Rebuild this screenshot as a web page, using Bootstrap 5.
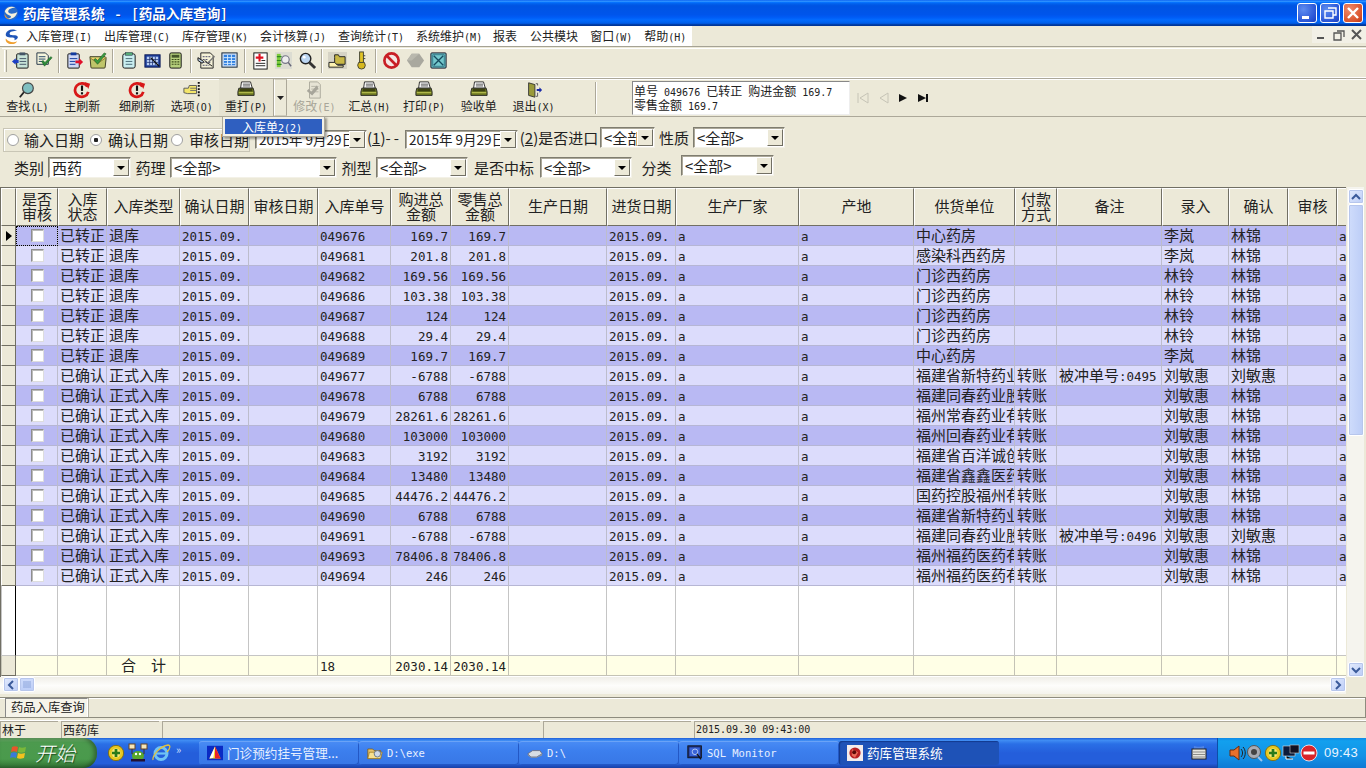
<!DOCTYPE html>
<html lang="zh-CN">
<head>
<meta charset="utf-8">
<title>药库管理系统</title>
<link href="https://cdn.jsdelivr.net/npm/bootstrap@5.3.0/dist/css/bootstrap.min.css" rel="stylesheet">
<style>
html,body{margin:0;padding:0;overflow:hidden;background:#ece9d8}
body{font-family:"Noto Sans CJK SC","Liberation Sans",sans-serif;font-size:15px;color:#222;line-height:1.2}
.lt{font-family:"DejaVu Sans Mono",monospace;white-space:pre}
.app{width:1366px;height:768px;position:relative;overflow:hidden}
/* title */
.titlebar{height:26px;padding:0 3px 0 3px;background:linear-gradient(180deg,#0058ee 0,#3593ff 4%,#288eff 6%,#127dff 8%,#036ffc 10%,#0262ee 14%,#0057e5 20%,#0054e3 24%,#0055eb 56%,#005bf5 66%,#026afe 76%,#0062ef 86%,#0052d6 92%,#0040ab 94%,#003092 100%);color:#fff}
.titletxt{font-weight:700;font-size:13.6px;margin-left:4px;white-space:nowrap;text-shadow:1px 1px 0 #0b3aa5}
.tdash{display:inline-block;width:27px;text-align:center}
.tbr{padding:0 1px}
.wbtn{width:20px;height:20px;border:1px solid #fff;border-radius:3px;background:radial-gradient(circle at 30% 30%,#5d8cf0,#2a55d6 70%,#1a3fbd);margin-left:3px;padding:0}
.wbtn.cl{background:radial-gradient(circle at 30% 30%,#f0896a,#d9532c 70%,#b8341a)}
.wbtn svg{display:block}
/* menu */
.menubar{height:20px;background:#ece9d8}
.menuwhite{width:692px;height:20px;background:#fff;padding-left:3px}
.mitem{font-size:12px;color:#222;white-space:nowrap}
.mitem .lt{font-size:10px}
.mdib{width:18px;height:17px;background:#f2f0e6}
.rb1{height:32px;border-top:1px solid #a5a294;padding:1px 0 0 2px;border-bottom:1px solid #fff}
.rb1-in{border-top:1px solid #fff;height:29px;padding-bottom:5px}
.grip{width:3px;height:22px;border-left:1px solid #fff;border-right:1px solid #aaa79a;margin:0 2px 0 2px}
.sep{width:2px;height:24px;border-left:1px solid #aca899;border-right:1px solid #fff;margin:0 3px 0 2px}
.tico{width:23.5px;height:23px;display:flex;align-items:center;justify-content:center}
.rb2{height:39px;border-top:1px solid #aca899;border-bottom:1px solid #aca899;box-shadow:inset 0 1px 0 #fff;position:relative}
.btn.bigb{width:54.8px;height:37px;border:0;border-radius:0;padding:2px 0 0;font-size:12px;color:#222;display:flex;flex-direction:column;align-items:center;line-height:14px;background:transparent;white-space:nowrap}
.btn.bigb .lt{font-size:10px}
.btn.bigb.dis{color:#a8a699;opacity:1}
.btn.bigb.on{background:#e6e3d2;border-right:1px solid #aca899}
.ddarrow{width:13px;height:37px;border:1px solid #d0cdbd;border-right-color:#aca899;border-left-color:#fff;display:flex;align-items:center;justify-content:center}
.infobox{position:absolute;left:632px;top:2px;width:218px;height:34px;background:#fff;border:1px solid #888;border-right-color:#eee;border-bottom-color:#eee;font-size:12px;line-height:12px;padding:3px 1px;white-space:pre}
.infobox .lt{font-size:10px}
.rsep{position:absolute;left:595px;top:3px;width:2px;height:32px;border-left:1px solid #aca899;border-right:1px solid #fff}
.navs{position:absolute;left:853px;top:10px;display:flex}
.navs span{width:20px;height:18px;display:flex;justify-content:center;align-items:center}
.dropdown-menu.popm{position:absolute;left:222px;top:116px;width:103px;height:21px;min-width:0;padding:2px;border-radius:0;background:#f3f1e7;border:1px solid #aca899;box-shadow:2px 2px 2px rgba(0,0,0,.35);z-index:20;display:block}
.popi{background:#2f5fc0;color:#fff;font-size:12px;height:15px;line-height:15px;padding-left:17px;display:block}
.popi .lt{font-size:10px}
/* filter */
.filters{height:70px;position:relative}
.frow1{display:grid;grid-template-columns:252px 112px 38px 113px 82px 55px 38px 92px;position:absolute;left:3px;top:10px;align-items:start}
.frow2{display:grid;grid-template-columns:34px 83px 39px 167px 39px 92px 72px 92px 49px 93px;position:absolute;left:14px;top:40px;align-items:start}
.gbox{height:24px;border:1px solid #c9c6b6;box-shadow:inset 1px 1px 0 #fff;width:247px;display:flex;align-items:center;padding-left:3px;margin-top:1px;white-space:nowrap}
.rd{appearance:none;width:12px;height:12px;border-radius:50%;border:1px solid #a0a0a0;background:#fff;margin:0;flex:none}
.rd:checked{background:radial-gradient(circle,#222 0,#222 2px,#fff 2.5px)}
.gl5{margin-left:5px}.gl6{margin-left:6px}.gl3{margin-left:3px}
.lab{line-height:21px;white-space:nowrap;text-align:center}
.dsh{letter-spacing:3px}
.combo{height:21px;background:#fff;border:1px solid #7f7d70;border-right-color:#f3f1e7;border-bottom-color:#f3f1e7;box-shadow:inset 1px 1px 0 #aca899;display:flex;justify-content:space-between;align-items:center;padding-left:3px;padding-right:1px;overflow:hidden;white-space:nowrap}
.combo b{font-weight:400;overflow:hidden;flex:1;line-height:19px}
.combo i{flex:none;width:16px;height:17px;background:#ece9d8;border:1px solid;border-color:#fff #716f64 #716f64 #fff;display:flex;align-items:center;justify-content:center}
.combo i::after{content:"";border:4px solid transparent;border-top:4px solid #000;border-bottom:0}
.combo.up2{margin-top:-2px}
.dt{font-size:12px;margin-top:3px;height:19px}
.dt b{line-height:17px;font-size:13.5px}
.ul{text-decoration:underline}
/* grid */
.gridwrap{height:490px;display:flex}
.gridbox{width:1346px;height:490px;border-top:1px solid #716f64;border-left:1px solid #716f64;overflow:hidden;background:#fff}
.table.gridt{table-layout:fixed;width:1346px;border-collapse:separate;border-spacing:0;margin:0;color:#222}
.table.gridt td,.table.gridt th{padding:0 1px 1px 2px;border:0;border-right:1px solid #bdbdcc;border-bottom:1px solid #b6b6d4;white-space:nowrap;font-weight:400;font-size:15px;line-height:18px;height:20px;vertical-align:middle}
.table.gridt td.clipc{overflow:hidden}
.table.gridt td .lt{font-size:12.5px;line-height:1}
.table.gridt td.nm,.table.gridt td.mn{font-family:"DejaVu Sans Mono",monospace;font-size:12.5px;padding-top:3px;padding-bottom:0;line-height:16px}
.table.gridt td.nm{text-align:right;padding-right:2px}
.table.gridt thead th{--bs-table-bg:#ece9d8;height:38px;text-align:center;line-height:15px;white-space:normal;border-top:1px solid #fff;border-left:1px solid #fff;border-right:1px solid #716f64;border-bottom:1px solid #716f64;padding:0 0 3px}
.table.gridt .ind{--bs-table-bg:#ece9d8;padding:0;border-right:1px solid #716f64;border-bottom:1px solid #716f64;border-left:1px solid #fff}
.r1{--bs-table-bg:#b9b9f3}
.r2{--bs-table-bg:#dcdcfc}
.table.gridt .fill td{--bs-table-bg:#fff;height:70px;border-color:#c5c5c5}
.table.gridt .tot td{--bs-table-bg:#ffffe6;border-color:#c4c3b5}
.table.gridt .tot td.ind{--bs-table-bg:#ece9d8;border-right-color:#716f64;border-bottom-color:#716f64}
.table.gridt .fill td.ind{--bs-table-bg:#fff;border-right-color:#000}
.cbk{appearance:none;display:block;margin:0 auto;width:13px;height:13px;background:#fff;border:1px solid #8e8e8e;border-right-color:#ddd;border-bottom-color:#ddd;box-shadow:inset 1px 1px 0 #bbb}
.table.gridt td.foc{outline:1px dotted #000;outline-offset:-1px}
.tri{display:block;border:5px solid transparent;border-left:6px solid #000;border-right:0;margin-left:4px}
.vscroll{width:17px;margin-left:1px;background:#f5f4ee;display:flex;flex-direction:column;align-items:center;height:490px;padding-top:2px}
.sbtn{width:16px;height:15px;background:linear-gradient(135deg,#e3ebfd,#bccdf7);border:1px solid #fff;border-radius:2px;box-shadow:0 0 0 1px #b7c6ec inset;display:flex;align-items:center;justify-content:center;flex:none}
.vthumb{width:16px;height:232px;background:linear-gradient(90deg,#cfdcfb,#bccdf7);border:1px solid #fff;border-radius:2px;box-shadow:0 0 0 1px #b7c6ec inset;flex:none}
.hscroll{height:17px;display:flex;padding-left:3px;background:linear-gradient(#f0efe8,#fdfdfb 50%,#f4f3ec);width:1346px}
.hthumb{width:16px;height:15px;background:linear-gradient(#cfdcfb,#bccdf7);border:1px solid #fff;border-radius:2px;box-shadow:0 0 0 1px #b7c6ec inset;display:flex;justify-content:center;align-items:center}
.corner{position:absolute;left:1347px;top:677px;width:19px;height:19px;background:#ece9d8}
/* tabs/status */
.tabs{height:26px;padding-top:3px}
.tabs-in{height:21px;display:flex;border-top:1px solid #8e8c7e;border-bottom:1px solid #8e8c7e;border-right:1px solid #8e8c7e;box-shadow:inset 0 1px 0 #fff}
.tabx{margin-left:5px;height:19px;width:83px;border-left:1px solid #888;border-top:1px solid #888;border-right:1px solid #fff;background:#f6f4ea;font-size:12.3px;line-height:17px;padding-left:5px;white-space:nowrap}
.tabtail{border-left:1px solid #b5b3a5;height:19px}
.statusb{height:18px;border-top:1px solid #fff;font-size:12px;line-height:15px}
.stc{border-left:1px solid #aca899;border-top:1px solid #aca899;height:17px;margin-right:3px;padding-left:1px;white-space:nowrap}
.stc.lt{font-size:10px}
.st58{width:58px}.st98{width:98px}.st378{width:378px}.st148{width:148px}
/* task */
.taskbar{height:30px;background:linear-gradient(180deg,#1f5fd8 0,#3f8cf3 8%,#2a6fe6 20%,#245edb 50%,#245edb 85%,#1941a5 100%);display:flex;color:#fff;position:relative;align-items:center}
.startb{width:97px;height:30px;background:linear-gradient(180deg,#6aa868 0,#4c9a4e 15%,#4a9a4c 70%,#2f6f31 100%);border-radius:0 14px 14px 0;box-shadow:inset -3px 0 4px rgba(0,0,0,.35);display:flex;align-items:center;padding-left:9px;gap:6px;font-style:italic;font-size:20px;font-weight:300;color:#fff;text-shadow:1px 1px 1px #1c4a1d;flex:none}
.quick{width:102px;display:flex;align-items:center;padding-left:10px;gap:3px;flex:none}
.chev{font-size:11px;color:#cfe0ff;margin-left:2px;line-height:1;margin-top:-8px}
.tbtn{width:160px;height:24px;border-radius:3px;background:linear-gradient(180deg,#4a8cf5,#3c7fee 40%,#3877e6);box-shadow:inset 0 1px 0 #6aa3f7,inset -1px -1px 0 #2358c5;display:flex;align-items:center;padding-left:8px;gap:4px;font-size:12.6px;white-space:nowrap;overflow:hidden;flex:none;color:#e8f0ff}
.tbtn .lt{font-size:10.5px}
.tbtn.act{background:#1e52b7;box-shadow:inset 1px 1px 1px #123a8e;color:#fff}
.tray{position:absolute;left:1217px;top:0;width:149px;height:30px;background:linear-gradient(180deg,#0f8ae8,#12a0ee 10%,#1292e6 60%,#0f7ad4);border-left:1px solid #0c4fa8;display:flex;align-items:center;padding-left:10px}
.clock{font-family:"Liberation Sans",sans-serif;font-size:13px;color:#eaf4ff;margin-left:6px;letter-spacing:.3px}
.kbd{position:absolute;left:1191px;top:7px}
svg{flex:none}
</style>
</head>
<body>
<svg width="0" height="0" class="position-absolute">
<defs>
<symbol id="logo" viewBox="0 0 18 18"><circle cx="9" cy="9" r="8" fill="#2a6cc8"/><path d="M2 7C4 2 10 1 14 3 9 3 5 5 6 8 7 11 13 10 16 8 15 14 9 17 5 15 9 15 10 13 8 12 6 11 3 10 2 7Z" fill="#f7f1dc"/><path d="M2 10c1 3 3 5 6 6-3 0-7-2-6-6z" fill="#e89a3a"/></symbol>
<symbol id="logom" viewBox="0 0 18 18"><path d="M15 3C10 0 4 2 3 6 2 10 7 10 10 10 12 10 13 11 12 13 16 12 17 9 14 8 11 7 7 8 7 6 7 4 11 3 15 3Z" fill="#1f55b8"/><path d="M3 11c-1 3 2 6 6 6 3 0 5-1 6-3-4 2-9 1-12-3z" fill="#f0a030"/></symbol>
<symbol id="i1" viewBox="0 0 20 20"><rect x="6" y="3" width="12" height="15" rx="1" fill="#c7e3d8" stroke="#111"/><rect x="9" y="1.5" width="6" height="3" fill="#456" /><path d="M9 8h7M9 11h7M9 14h7" stroke="#456"/><path d="M1 11l4-3.5v2h3v3H5v2z" fill="#1d3fc4"/></symbol>
<symbol id="i2" viewBox="0 0 20 20"><path d="M2 2h9l3 3v9H2z" fill="#f5f5dc" stroke="#234"/><path d="M4 6h7M4 8.5h7M4 11h5" stroke="#246"/><path d="M7 11l3 5 8-9-1.500-1-6 6-2-2z" fill="#2e8b3a" stroke="#1a5c24" stroke-width=".6"/></symbol>
<symbol id="i3" viewBox="0 0 20 20"><rect x="3" y="3" width="12" height="15" rx="1" fill="#cfd8f5" stroke="#111"/><rect x="6" y="1.500" width="6" height="3" fill="#123b9e"/><path d="M5 8h8M5 11h6M5 14h6" stroke="#123b9e"/><path d="M19 11.500l-4-4v2.500h-4v3h4V15.500z" fill="#e0102c"/></symbol>
<symbol id="i4" viewBox="0 0 20 20"><path d="M1 6h16a2 2 0 0 1 1 2l-1 9a1 1 0 0 1-1 1H3a1 1 0 0 1-1-1z" fill="#bfc56a" stroke="#3c3c22"/><path d="M1 7l8 6 9-6" fill="#f0d36e" stroke="#6b5c20" stroke-width=".7"/><path d="M5 9l4 5 9-11-2-1-7 8-2-2z" fill="#3a9c3f" stroke="#1c5a20" stroke-width=".6"/></symbol>
<symbol id="i5" viewBox="0 0 20 20"><rect x="4" y="3" width="13" height="15" rx="2" fill="#c9eef0" stroke="#111"/><rect x="7" y="1.500" width="7" height="3" fill="#5a7" stroke="#234" stroke-width=".5"/><path d="M7 8h7M7 11h7M7 14h7" stroke="#4a6a76"/></symbol>
<symbol id="i6" viewBox="0 0 20 20"><rect x="2" y="4" width="16" height="13" fill="#1d3f9d" stroke="#0c1a55"/><path d="M4 6h12v9H4z" fill="#b8cff5"/><path d="M4 9h12M4 12h12M7 6v9M10 6v9M13 6v9" stroke="#1c3070" stroke-width=".8"/><path d="M8 7l9 9" stroke="#111" stroke-width="1.400"/></symbol>
<symbol id="i7" viewBox="0 0 20 20"><rect x="4" y="2" width="12" height="16" rx="1.500" fill="#b6cf7c" stroke="#111"/><rect x="6" y="4" width="8" height="3" fill="#44552a"/><path d="M6 9h8M6 11.500h8M6 14h8" stroke="#3a4a1a" stroke-width="1.200" stroke-dasharray="2 1"/></symbol>
<symbol id="i8" viewBox="0 0 20 20"><path d="M4 2h10l3 3v13H4z" fill="#f5f2d8" stroke="#222"/><path d="M6 6h8M6 9h6M6 12h8M6 15h7" stroke="#446" stroke-dasharray="2 1"/><path d="M1 7l6 4-1.500 2L1 10zM8 10l8 6" stroke="#111" fill="#bcd"/><path d="M10 13l8-8 1 1-8 8z" fill="#777"/></symbol>
<symbol id="i9" viewBox="0 0 20 20"><rect x="2" y="2" width="16" height="15" fill="#cfe0f5" stroke="#123"/><path d="M4 4h12v11H4z" fill="#2f7fe0"/><path d="M4 7h12M4 10h12M4 13h12M8 4v11M12 4v11" stroke="#d6ecff"/></symbol>
<symbol id="i10" viewBox="0 0 20 20"><rect x="3" y="2" width="14" height="17" fill="#fff" stroke="#111"/><path d="M9 3v8M5 7h8" stroke="#e01020" stroke-width="2.200"/><path d="M5 13h10M5 15.500h10M11 10h4" stroke="#222"/></symbol>
<symbol id="i11" viewBox="0 0 20 20"><rect x="1" y="1" width="18" height="18" fill="#dcdcd2"/><rect x="3" y="3" width="4" height="14" fill="#7ecb3c"/><path d="M3 6h5M3 10h5M3 14h5" stroke="#2c8a1e" stroke-width="1.300"/><circle cx="12" cy="9" r="4" fill="#eee" stroke="#778" stroke-width="1.200"/><path d="M15 12l3 4" stroke="#667" stroke-width="1.500"/></symbol>
<symbol id="i12" viewBox="0 0 20 20"><circle cx="8" cy="8" r="5.500" fill="#bcd6f2" stroke="#222" stroke-width="1.500"/><circle cx="6.500" cy="6.500" r="1.500" fill="#fff"/><path d="M12 12l6 6" stroke="#333" stroke-width="3"/></symbol>
<symbol id="i13" viewBox="0 0 20 20"><rect x="0" y="1" width="20" height="18" fill="#d6d3c5"/><path d="M7 7V4h4l1 2h6v8H7z" fill="#c9b846" stroke="#222"/><path d="M1 12h6l3 3h6v2H1z" fill="#fdf2b0" stroke="#222"/></symbol>
<symbol id="i14" viewBox="0 0 20 20"><circle cx="10" cy="15" r="4" fill="#d6b81e" stroke="#443"/><rect x="8" y="1" width="4" height="11" fill="#e0c326" stroke="#443"/><path d="M12 5h2M12 8h2" stroke="#443"/></symbol>
<symbol id="i15" viewBox="0 0 20 20"><circle cx="10" cy="10" r="7.500" fill="#f4e7e4" stroke="#c81e25" stroke-width="2.800"/><path d="M5 5l10 10" stroke="#c81e25" stroke-width="2.800"/></symbol>
<symbol id="i16" viewBox="0 0 20 20"><path d="M6 3h8l5 7-5 7H6L1 10z" fill="#a9a89f"/><path d="M1 10l5-7h8l-8 7z" fill="#b9b8ae"/></symbol>
<symbol id="i17" viewBox="0 0 20 20"><rect x="2" y="2" width="16" height="16" rx="1" fill="#74c8cc" stroke="#112"/><path d="M5 5l10 10M15 5L5 15" stroke="#154a5e" stroke-width="1.400"/><rect x="4" y="4" width="12" height="12" fill="none" stroke="#1a5a70" stroke-width=".7"/></symbol>
<symbol id="bfind" viewBox="0 0 20 20"><circle cx="11" cy="8" r="6" fill="#7fbfc0" stroke="#444" stroke-width="1.300"/><path d="M6.500 12.500L2 18" stroke="#222" stroke-width="2"/></symbol>
<symbol id="bref" viewBox="0 0 20 20"><path d="M16 6A7.500 7.500 0 1 0 17 12" fill="none" stroke="#d81818" stroke-width="3"/><path d="M13 1l6 2-2 6z" fill="#d81818"/><rect x="8.800" y="5" width="2.400" height="6" fill="#111"/><rect x="8.800" y="12.500" width="2.400" height="2.400" fill="#111"/></symbol>
<symbol id="bopt" viewBox="0 0 20 20"><path d="M1 8h5l1-3 8 0v9H5l-4-1z" fill="#f4e66a" stroke="#555"/><path d="M8 8h7M8 10.500h7" stroke="#666"/><path d="M17.500 1v16" stroke="#111" stroke-width="2.200" stroke-dasharray="2 1.500"/></symbol>
<symbol id="bprn" viewBox="0 0 20 20"><path d="M5 1h10l2 7H4z" fill="#fff" stroke="#222"/><path d="M6.500 3.500h8M6.500 5.500h8" stroke="#444"/><path d="M2 8h16l1 4v4H1v-4z" fill="#6f7a22" stroke="#222"/><path d="M2 13h16" stroke="#c9d05a"/><rect x="3" y="9" width="14" height="2.500" fill="#3a3f10"/></symbol>
<symbol id="bedit" viewBox="0 0 20 20"><path d="M5 1h9l3 3v15H5z" fill="#e6e3d4" stroke="#a9a79a"/><path d="M7 6h8M7 9h8M7 12h8" stroke="#b3b1a4"/><path d="M2 11l6 5 7-8-2-3-6 7-3-3z" fill="#a7a59a"/></symbol>
<symbol id="bexit" viewBox="0 0 20 20"><path d="M4 2l7 2v14l-7-2z" fill="#9a9a3a" stroke="#333"/><path d="M12 3h2v2M12 17h2v-4" stroke="#555" fill="none"/><path d="M13 9h3V7l3 3-3 3v-2h-3z" fill="#1a2aa8"/></symbol>
<symbol id="flag" viewBox="0 0 20 20"><path d="M3 4c2-1 4-1 6 0l-1 5c-2-1-4-1-6 0z" fill="#e8552a"/><path d="M10 4c2 1 4 1 7 0l-1 5c-3 1-5 1-7 0z" fill="#7ab83a"/><path d="M2 10c2-1 4-1 6 0l-1 5c-2-1-4-1-6 0z" fill="#3a7ad8"/><path d="M9 10c2 1 4 1 7 0l-1 5c-3 1-5 1-7 0z" fill="#f4c21e"/></symbol>
<symbol id="q360" viewBox="0 0 20 20"><circle cx="10" cy="10" r="8.500" fill="#e8c820" stroke="#7a6a10"/><circle cx="10" cy="10" r="5" fill="#f8e878"/><path d="M8.500 5.500h3v3h3v3h-3v3h-3v-3h-3v-3h3z" fill="#2a7a1a"/></symbol>
<symbol id="qfrog" viewBox="0 0 20 20"><rect x="1" y="1" width="6" height="5" fill="#f5e6b8" stroke="#642"/><rect x="13" y="1" width="6" height="5" fill="#f5e6b8" stroke="#642"/><path d="M4 6v5h12V6" fill="none" stroke="#432"/><ellipse cx="10" cy="13" rx="6" ry="5" fill="#58a82a"/><rect x="3" y="16" width="14" height="2.500" fill="#213"/><circle cx="8" cy="11" r="1.200" fill="#fff"/><circle cx="12" cy="11" r="1.200" fill="#fff"/></symbol>
<symbol id="qie" viewBox="0 0 20 20"><circle cx="10" cy="10.500" r="6" fill="none" stroke="#6fc3f5" stroke-width="3"/><path d="M5 10.500h10" stroke="#6fc3f5" stroke-width="2.200"/><path d="M2 17C1 13 9 3 17 2c3 0 2 4-1 7" fill="none" stroke="#e0c040" stroke-width="1.300"/></symbol>
<symbol id="tap" viewBox="0 0 20 20"><rect x="0" y="1" width="20" height="18" fill="#0a2ac4"/><path d="M10 2L3 17h14z" fill="#f5d21e"/><path d="M10 2l7 15H10z" fill="#e8202a"/><path d="M10 2L3 17l5-1z" fill="#fff"/></symbol>
<symbol id="tfold" viewBox="0 0 20 20"><path d="M1 5h6l2 2h8v10H1z" fill="#e9c46a" stroke="#7a5a1a"/><path d="M3 9h16l-2 8H1z" fill="#f8e08e" stroke="#9a7a2a"/><circle cx="13" cy="11" r="4" fill="#cfd8e8" stroke="#567"/></symbol>
<symbol id="tdrv" viewBox="0 0 20 20"><path d="M1 11l6-4h9l3 4-7 4H5z" fill="#d8dde4" stroke="#667"/><path d="M1 11l4 4h7l7-4v2l-7 3H5l-4-3z" fill="#8a93a0"/></symbol>
<symbol id="tsql" viewBox="0 0 20 20"><rect x="1" y="1" width="17" height="15" fill="#1a2a6a" stroke="#111"/><rect x="3" y="3" width="13" height="11" fill="#3a64d8"/><circle cx="10" cy="8.500" r="3.500" fill="none" stroke="#c8d8f8"/><path d="M12.500 11l5 7" stroke="#111" stroke-width="1.600"/></symbol>
<symbol id="tyk" viewBox="0 0 20 20"><rect x="0" y="0" width="20" height="20" fill="#f3ecec"/><circle cx="10" cy="10" r="7" fill="#b81e22"/><path d="M6 5l8 4-4 7-4-3z" fill="#e86a5a"/><circle cx="9" cy="9" r="2.500" fill="#5a0808"/></symbol>
<symbol id="kbdi" viewBox="0 0 16 16"><path d="M3 1c2 1 8 1 10 0v3H3z" fill="#f5f5f5" fill-opacity=".2"/><rect x="1" y="4" width="14" height="10" fill="#e6e6e0" stroke="#222"/><path d="M2.500 7h11M2.500 9.500h11M2.500 12h11" stroke="#333" stroke-width="1.200" stroke-dasharray="1 1"/></symbol>
<symbol id="sp" viewBox="0 0 18 18"><path d="M2 6h4l5-4v14l-5-4H2z" fill="#e8702a" stroke="#6a2a0a"/><path d="M13 5c2 2 2 6 0 8M15 3c3 3 3 9 0 12" stroke="#222" fill="none"/></symbol>
<symbol id="cam" viewBox="0 0 18 18"><circle cx="8" cy="8" r="6.500" fill="#a8acb4" stroke="#555"/><circle cx="8" cy="8" r="3" fill="#444"/><path d="M12 13l4 4" stroke="#9cc4ec" stroke-width="2"/></symbol>
<symbol id="scr" viewBox="0 0 18 18"><rect x="1" y="2" width="12" height="10" fill="#0c1a3a" stroke="#ddd" stroke-width=".6"/><rect x="8" y="1" width="9" height="8" fill="#112" stroke="#ccc" stroke-width=".6"/><path d="M4 12v3h7" stroke="#fff"/></symbol>
<symbol id="stopi" viewBox="0 0 18 18"><circle cx="9" cy="9" r="8" fill="#d8242a" stroke="#fff" stroke-width=".8"/><rect x="3.500" y="7.500" width="11" height="3" fill="#fff"/></symbol>
</defs>
</svg>
<div class="app d-flex flex-column">
  <div class="titlebar d-flex align-items-center">
    <svg width="16" height="16" aria-hidden="true"><use href="#logo"/></svg>
    <span class="titletxt">药库管理系统<span class="tdash">-</span><span class="tbr">[</span>药品入库查询<span class="tbr">]</span></span>
    <div class="ms-auto d-flex">
      <button class="wbtn" type="button" aria-label="min"><svg width="18" height="18"><rect x="4" y="12" width="7" height="3" fill="#fff"/></svg></button>
      <button class="wbtn" type="button" aria-label="max"><svg width="18" height="18"><path d="M7 4h8v7h-3M4 7h8v7H4z" fill="none" stroke="#fff" stroke-width="1.400"/></svg></button>
      <button class="wbtn cl" type="button" aria-label="close"><svg width="18" height="18"><path d="M4 4l10 10M14 4L4 14" stroke="#fff" stroke-width="2.400"/></svg></button>
    </div>
  </div>
  <div class="menubar d-flex">
    <div class="menuwhite d-flex align-items-center" id="menuw"></div>
    <div class="ms-auto d-flex">
      <span class="mdib d-flex align-items-center justify-content-center"><svg width="12" height="12"><rect x="2" y="8" width="7" height="2" fill="#555"/></svg></span>
      <span class="mdib d-flex align-items-center justify-content-center"><svg width="12" height="12"><path d="M4 2h7v6M1 4h7v7H1z" fill="none" stroke="#555" stroke-width="1.300"/></svg></span>
      <span class="mdib d-flex align-items-center justify-content-center"><svg width="12" height="12"><path d="M1 1l9 9M10 1l-9 9" stroke="#555" stroke-width="2"/></svg></span>
    </div>
  </div>
  <div class="rb1"><div class="rb1-in d-flex align-items-center" id="tb1"></div></div>
  <div class="rb2 d-flex align-items-start" id="tb2">
    <div class="rsep"></div>
    <div class="infobox">单号<span class="lt"> 049676 </span>已转正<span class="lt"> </span>购进金额<span class="lt"> 169.7</span>
零售金额<span class="lt"> 169.7</span></div>
    <div class="navs">
      <span><svg width="14" height="12"><path d="M2 1v10M12 1L4 6l8 5z" fill="none" stroke="#c6c4b6"/></svg></span>
      <span><svg width="14" height="12"><path d="M12 1L4 6l8 5z" fill="none" stroke="#c6c4b6"/></svg></span>
      <span><svg width="14" height="12"><path d="M3 2l8 4-8 4z" fill="#111"/></svg></span>
      <span><svg width="14" height="12"><path d="M2 2l8 4-8 4zM10 2h2v8h-2z" fill="#111"/></svg></span>
    </div>
  </div>
  <div class="filters">
    <div class="frow1">
      <div class="gbox"><input class="rd" type="radio" name="d" aria-label="输入日期"><span class="gl5">输入日期</span><input class="rd gl6" type="radio" name="d" checked aria-label="确认日期"><span class="gl6">确认日期</span><input class="rd gl3" type="radio" name="d" aria-label="审核日期"><span class="gl6">审核日期</span></div>
      <div class="combo dt"><b>2015年 9月29日</b><i></i></div>
      <div class="lab text-start">(<span class="ul">1</span>)<span class="dsh">--</span></div>
      <div class="combo dt"><b>2015年 9月29日</b><i></i></div>
      <div class="lab">(<span class="ul">2</span>)是否进口</div>
      <div class="combo"><b>&lt;全部&gt;</b><i></i></div>
      <div class="lab">性质</div>
      <div class="combo"><b>&lt;全部&gt;</b><i></i></div>
    </div>
    <div class="frow2">
      <div class="lab text-start">类别</div>
      <div class="combo"><b>西药</b><i></i></div>
      <div class="lab">药理</div>
      <div class="combo"><b>&lt;全部&gt;</b><i></i></div>
      <div class="lab">剂型</div>
      <div class="combo"><b>&lt;全部&gt;</b><i></i></div>
      <div class="lab">是否中标</div>
      <div class="combo"><b>&lt;全部&gt;</b><i></i></div>
      <div class="lab">分类</div>
      <div class="combo up2"><b>&lt;全部&gt;</b><i></i></div>
    </div>
  </div>
  <div class="gridwrap">
    <div class="gridbox"><table class="table gridt"><colgroup id="cg"></colgroup><thead><tr id="hd"></tr></thead><tbody id="bd"></tbody></table></div>
    <div class="vscroll">
      <div class="sbtn"><svg width="10" height="8"><path d="M1 6l4-4 4 4" fill="none" stroke="#3a5a9a" stroke-width="2"/></svg></div>
      <div class="vthumb"></div>
      <div class="sbtn mt-auto"><svg width="10" height="8"><path d="M1 2l4 4 4-4" fill="none" stroke="#3a5a9a" stroke-width="2"/></svg></div>
    </div>
  </div>
  <div class="hscroll">
    <div class="sbtn"><svg width="8" height="10"><path d="M6 1L2 5l4 4" fill="none" stroke="#3a5a9a" stroke-width="2"/></svg></div>
    <div class="hthumb"><svg width="8" height="7"><path d="M1 0v7M3 0v7M5 0v7M7 0v7" stroke="#8ea6dc"/></svg></div>
    <div class="sbtn ms-auto"><svg width="8" height="10"><path d="M2 1l4 4-4 4" fill="none" stroke="#3a5a9a" stroke-width="2"/></svg></div>
  </div>
  <div class="corner"></div>
  <div class="tabs"><div class="tabs-in"><span class="tabx">药品入库查询</span><span class="tabtail"></span></div></div>
  <div class="statusb d-flex">
    <div class="stc st58">林于</div>
    <div class="stc st98">西药库</div>
    <div class="stc st378"></div>
    <div class="stc st148"></div>
    <div class="stc lt flex-grow-1 m-0">2015.09.30 09:43:00</div>
  </div>
  <div class="taskbar">
    <div class="startb"><svg width="20" height="20"><use href="#flag"/></svg><span>开始</span></div>
    <div class="quick">
      <svg width="18" height="18"><use href="#q360"/></svg>
      <svg width="20" height="20"><use href="#qfrog"/></svg>
      <svg width="20" height="20"><use href="#qie"/></svg>
      <span class="chev">»</span>
    </div>
    <div class="tbtn"><svg width="16" height="16"><use href="#tap"/></svg><span>门诊预约挂号管理...</span></div>
    <div class="tbtn"><svg width="16" height="16"><use href="#tfold"/></svg><span class="lt">D:\exe</span></div>
    <div class="tbtn"><svg width="16" height="16"><use href="#tdrv"/></svg><span class="lt">D:\</span></div>
    <div class="tbtn"><svg width="16" height="16"><use href="#tsql"/></svg><span class="lt">SQL Monitor</span></div>
    <div class="tbtn act"><svg width="16" height="16"><use href="#tyk"/></svg><span>药库管理系统</span></div>
    <svg class="kbd" width="16" height="16"><use href="#kbdi"/></svg>
    <div class="tray">
      <svg width="18" height="18"><use href="#sp"/></svg>
      <svg width="18" height="18"><use href="#cam"/></svg>
      <svg width="18" height="18"><use href="#q360"/></svg>
      <svg width="18" height="18"><use href="#scr"/></svg>
      <svg width="18" height="18"><use href="#stopi"/></svg>
      <span class="clock">09:43</span>
    </div>
  </div>
  <div class="dropdown-menu popm show"><span class="popi">入库单<span class="lt">2(2)</span></span></div>
</div>
<script>
function lat(s){return s.replace(/[\x20-\x7e]+/g,function(m){return '<span class="lt">'+m+'</span>'})}
var menu=[['入库管理(I)',26],['出库管理(C)',104],['库存管理(K)',182],['会计核算(J)',260],['查询统计(T)',338],['系统维护(M)',416],['报表',493],['公共模块',530],['窗口(W)',590],['帮助(H)',644]];
var mw=document.getElementById('menuw');
mw.innerHTML='<svg width="17" height="17" aria-hidden="true"><use href="#logom"/></svg>';var px=20;
menu.forEach(function(m){var s=document.createElement('span');s.className='mitem';s.innerHTML=lat(m[0]);s.style.marginLeft=(m[1]-px)+'px';mw.appendChild(s);px=m[1]+(m[0].replace(/[\x20-\x7e]/g,'').length*12)+(m[0].replace(/[^\x20-\x7e]/g,'').length*6.02)});
var groups=[['i1','i2'],['i3','i4'],['i5','i6','i7'],['i8','i9'],['i10','i11','i12'],['i13','i14'],['i15','i16','i17']];
var h='<span class="grip"></span>';
groups.forEach(function(g,k){g.forEach(function(i){h+='<span class="tico"><svg width="19" height="19"><use href="#'+i+'"/></svg></span>'});if(k<groups.length-1)h+='<span class="sep"></span>'});
document.getElementById('tb1').innerHTML=h;
var bb=[['bfind','查找(L)'],['bref','主刷新'],['bref','细刷新'],['bopt','选项(O)'],['bprn','重打(P)',' on'],null,['bedit','修改(E)',' dis'],['bprn','汇总(H)'],['bprn','打印(P)'],['bprn','验收单'],['bexit','退出(X)']];
var t='';
bb.forEach(function(b){if(!b){t+='<span class="ddarrow"><svg width="7" height="4"><path d="M0 0h7L3.500 4z" fill="#222"/></svg></span>';return}
t+='<button type="button" class="btn bigb'+(b[2]||'')+'"><svg width="18" height="18"><use href="#'+b[0]+'"/></svg><span>'+lat(b[1])+'</span></button>'});
document.getElementById('tb2').insertAdjacentHTML('afterbegin',t);
var cols=[15,42,49,73,69,69,73,60,58,98,69,123,115,101,42,105,67,59,49,10];
document.getElementById('cg').innerHTML=cols.map(function(w){return '<col style="width:'+w+'px">'}).join('');
var hd=['','是否<br>审核','入库<br>状态','入库类型','确认日期','审核日期','入库单号','购进总<br>金额','零售总<br>金额','生产日期','进货日期','生产厂家','产地','供货单位','付款<br>方式','备注','录入','确认','审核',''];
document.getElementById('hd').innerHTML=hd.map(function(x){return '<th>'+x+'</th>'}).join('');
var A='已转正',B='已确认',C='退库',D='正式入库';
var rows=[
[A,C,'049676','169.7','169.7','中心药房','','','李岚'],
[A,C,'049681','201.8','201.8','感染科西药房','','','李岚'],
[A,C,'049682','169.56','169.56','门诊西药房','','','林铃'],
[A,C,'049686','103.38','103.38','门诊西药房','','','林铃'],
[A,C,'049687','124','124','门诊西药房','','','林铃'],
[A,C,'049688','29.4','29.4','门诊西药房','','','林铃'],
[A,C,'049689','169.7','169.7','中心药房','','','李岚'],
[B,D,'049677','-6788','-6788','福建省新特药业','转账','被冲单号:0495','刘敏惠','刘敏惠'],
[B,D,'049678','6788','6788','福建同春药业股','转账','','刘敏惠'],
[B,D,'049679','28261.6','28261.6','福州常春药业有','转账','','刘敏惠'],
[B,D,'049680','103000','103000','福州回春药业有','转账','','刘敏惠'],
[B,D,'049683','3192','3192','福建省百洋诚创','转账','','刘敏惠'],
[B,D,'049684','13480','13480','福建省鑫鑫医药','转账','','刘敏惠'],
[B,D,'049685','44476.2','44476.2','国药控股福州有','转账','','刘敏惠'],
[B,D,'049690','6788','6788','福建省新特药业','转账','','刘敏惠'],
[B,D,'049691','-6788','-6788','福建同春药业股','转账','被冲单号:0496','刘敏惠','刘敏惠'],
[B,D,'049693','78406.8','78406.8','福州福药医药有','转账','','刘敏惠'],
[B,D,'049694','246','246','福州福药医药有','转账','','刘敏惠']];
var out='';
rows.forEach(function(r,i){
 out+='<tr class="'+(i%2?'r2':'r1')+'"><td class="ind">'+(i==0?'<span class="tri"></span>':'')+'</td>'
 +'<td'+(i==0?' class="foc"':'')+'><input type="checkbox" class="cbk" aria-label="审核"></td>'
 +'<td>'+r[0]+'</td><td>'+r[1]+'</td><td class="mn">2015.09.</td><td></td><td class="mn">'+r[2]+'</td>'
 +'<td class="nm">'+r[3]+'</td><td class="nm">'+r[4]+'</td><td></td><td class="mn">2015.09.</td><td class="mn">a</td><td class="mn">a</td>'
 +'<td class="clipc">'+r[5]+'</td><td>'+r[6]+'</td><td>'+lat(r[7])+'</td><td>'+r[8]+'</td><td>'+(r[9]||'林锦')+'</td><td></td><td class="mn">a</td></tr>';
});
function blank(cl,fn){var s='<tr class="'+cl+'">';for(var c=0;c<20;c++){s+=fn(c)}return s+'</tr>'}
out+=blank('fill',function(c){return c==0?'<td class="ind"></td>':'<td></td>'});
out+=blank('tot',function(c){
 if(c==0)return '<td class="ind"></td>';
 if(c==3)return '<td class="text-center">合　计</td>';
 if(c==6)return '<td class="mn">18</td>';
 if(c==7||c==8)return '<td class="nm">2030.14</td>';
 return '<td></td>'});
document.getElementById('bd').innerHTML=out;
</script>
<script src="https://cdn.jsdelivr.net/npm/bootstrap@5.3.0/dist/js/bootstrap.bundle.min.js"></script>
</body>
</html>
